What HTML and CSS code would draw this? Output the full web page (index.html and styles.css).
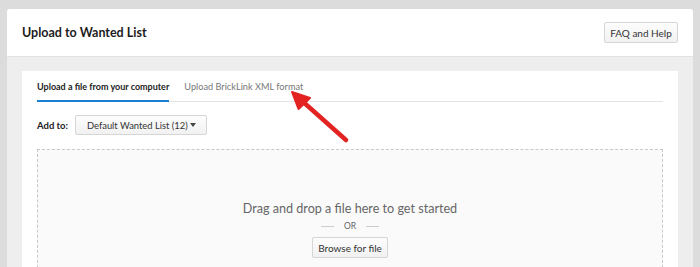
FILE: index.html
```html
<!DOCTYPE html>
<html lang="en">
<head>
  <meta charset="UTF-8" />
  <title>Upload to Wanted List</title>
  <link rel="stylesheet" href="styles.css">
</head>
<body>

<div class="panel">
  <div class="header">
    <h2>Upload to Wanted List</h2>
    <button class="btn">FAQ and Help</button>
  </div>

  <div class="content">
    <div class="card">
      <div class="tabs">
        <div class="tab active">Upload a file from your computer</div>
        <div class="tab">Upload BrickLink XML format</div>
      </div>

      <div class="add-row">
        <span class="add-label">Add to:</span>
        <button class="btn select">Default Wanted List (12) <span class="caret"></span></button>
      </div>

      <div class="dropzone">
        <div class="drop-text">Drag and drop a file here to get started</div>
        <div class="or"><span class="line"></span>OR<span class="line"></span></div>
        <button class="btn browse">Browse for file</button>
      </div>

      <svg class="arrow" width="70" height="60" viewBox="0 0 70 60">
        <line x1="15" y1="15" x2="60" y2="55" stroke="#e32222" stroke-width="4.5" stroke-linecap="round"/>
        <polygon points="6,7 12.5,24 24,13" fill="#e32222" stroke="#e32222" stroke-width="2" stroke-linejoin="round"/>
      </svg>
    </div>
  </div>
</div>

</body>
</html>
```

FILE: styles.css
```css
body {
  margin: 0;
  padding: 9px 7px 0 7px;
  background: #dcdcdc;
  font-family: 'Lato', 'Helvetica', sans-serif;
  color: #222;
  height: 267px;
  box-sizing: border-box;
  overflow: hidden;
}

.panel {
  background: #eeeeee;
  border-radius: 3px 3px 0 0;
  height: 100%;
}

.header {
  background: #fff;
  height: 47px;
  padding: 0 15px;
  display: flex;
  align-items: center;
  justify-content: space-between;
  border-bottom: 1px solid #e2e2e2;
  border-radius: 3px 3px 0 0;
}

.header h2 {
  margin: 0;
  font-size: 12.5px;
  font-weight: bold;
  color: #1c1c1c;
}

.btn {
  font-family: 'Lato', 'Helvetica', sans-serif;
  font-size: 10px;
  color: #333;
  background: linear-gradient(180deg, #fdfdfd 0%, #f1f1f1 100%);
  border: 1px solid #d6d6d6;
  border-radius: 2px;
  height: 21px;
  padding: 0 9px;
  white-space: nowrap;
  cursor: pointer;
}

.header .btn {
  width: 74px;
  padding: 0;
}

.content {
  padding: 14px 15px 0 15px;
}

.card {
  position: relative;
  background: #fff;
  padding: 0 15px;
  height: 196px;
}

.tabs {
  display: flex;
  gap: 15px;
  border-bottom: 1px solid #e3e3e3;
}

.tab {
  font-size: 9.2px;
  color: #777;
  padding: 10px 0 8px 0;
  border-bottom: 2px solid transparent;
  margin-bottom: -1px;
}

.tab.active {
  color: #222;
  font-weight: bold;
  font-size: 9px;
  border-bottom-color: #1a7fd0;
}

.add-row {
  display: flex;
  align-items: center;
  gap: 7px;
  margin-top: 13px;
}

.add-label {
  font-size: 9.5px;
  font-weight: bold;
  color: #222;
}

.select {
  width: 132px;
  height: 20px;
  font-size: 9.4px;
  text-align: left;
  padding: 0 10px 0 11px;
  display: flex;
  align-items: center;
  justify-content: space-between;
}

.caret {
  width: 0;
  height: 0;
  border-left: 3.5px solid transparent;
  border-right: 3.5px solid transparent;
  border-top: 4px solid #444;
}

.dropzone {
  margin-top: 14px;
  border: 1px dashed #c8c8c8;
  border-bottom: none;
  background: #fafafa;
  height: 119px;
  display: flex;
  flex-direction: column;
  align-items: center;
  padding-top: 51px;
  box-sizing: border-box;
}

.drop-text {
  font-size: 12.6px;
  color: #666;
}

.or {
  display: flex;
  align-items: center;
  gap: 10px;
  font-size: 8.5px;
  color: #666;
  margin: 5px 0 6px 0;
}

.or .line {
  width: 13px;
  border-top: 1px solid #ccc;
}

.browse {
  width: 76px;
  padding: 0;
}

.arrow {
  position: absolute;
  left: 264px;
  top: 14px;
}
```
